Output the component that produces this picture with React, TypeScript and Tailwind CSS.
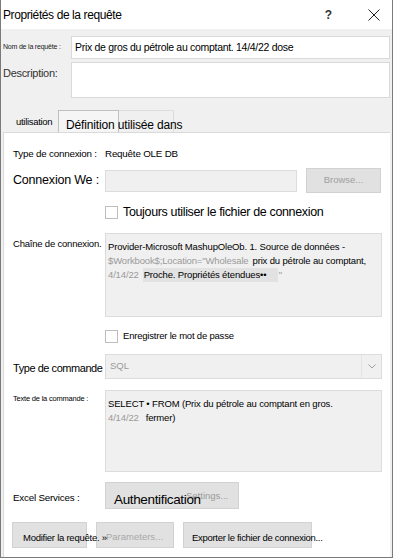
import type { ReactNode } from 'react';

/**
 * "Propriétés de la requête" dialog (Excel connection properties, Définition tab).
 * Fixed 393x558 window, Windows-style chrome.
 */
const FONT = "font-['Liberation_Sans',Arial,sans-serif]";

function Checkbox(): ReactNode {
  return <span className="block h-[13px] w-[13px] shrink-0 border border-[#bdbdbd] bg-white" />;
}

function GrayButton({
  className,
  children,
}: {
  readonly className: string;
  readonly children?: ReactNode;
}): ReactNode {
  return (
    <div
      className={`relative flex items-center border border-[#d2d2d2] bg-[#e1e1e1] ${className}`}
    >
      {children}
    </div>
  );
}

export default function App(): ReactNode {
  return (
    <div
      className={`${FONT} flex h-[558px] w-[393px] flex-col overflow-hidden border-x border-b border-[#7a7a7a] bg-[#f0f0f0] text-black`}
    >
      {/* title bar */}
      <div className="flex h-[29px] shrink-0 items-center bg-white">
        <span className="pl-[2px] text-[12px] tracking-[-0.4px]">Propriétés de la requête</span>
        <span className="ml-auto text-[12px] font-bold text-[#333]">?</span>
        <svg className="ml-[36px] mr-[12px]" width="12" height="12" viewBox="0 0 12 12">
          <path d="M0.5 0.5 L11.5 11.5 M11.5 0.5 L0.5 11.5" stroke="#222" strokeWidth="1" />
        </svg>
      </div>

      {/* name + description */}
      <div className="flex flex-col gap-[3px] pt-[7px]">
        <div className="flex h-[23px] items-center">
          <span className="w-[70px] pl-[2px] text-[7px] tracking-[-0.2px] text-[#222]">
            Nom de la requête :
          </span>
          <div className="flex h-full w-[319px] items-center border border-[#d9d9d9] bg-white pl-[3px] text-[10.5px] tracking-[-0.3px]">
            Prix de gros du pétrole au comptant. 14/4/22 dose
          </div>
        </div>
        <div className="flex h-[36px]">
          <span className="w-[70px] pl-[2px] pt-[3px] text-[11px] tracking-[-0.3px] text-[#333]">
            Description:
          </span>
          <div className="h-full w-[319px] border border-[#d9d9d9] bg-white" />
        </div>
      </div>

      {/* tabs */}
      <div className="mt-[12px] flex h-[22px] shrink-0 items-end">
        <span className="w-[15px]" />
        <span className="w-[42px] pb-[3px] text-[9.5px] tracking-[-0.3px]">utilisation</span>
        <div className="relative h-[22px] w-[61px] border-x border-t border-[#c0c0c0] bg-[#f5f5f5]">
          <span className="absolute left-[7px] top-[5px] whitespace-nowrap text-[12px] tracking-[-0.15px]">
            Définition utilisée dans
          </span>
        </div>
        <div className="h-[22px] w-[55px] border-r border-t border-[#dcdcdc]" />
      </div>

      {/* panel */}
      <div className="mx-[2px] flex flex-1 flex-col border-l border-t border-[#dadada] bg-white pl-[8px] pr-[7px]">
        <div className="mt-[14px] flex h-[14px] items-center text-[9.8px] tracking-[-0.2px]">
          <span className="w-[93px] pl-px">Type de connexion :</span>
          <span>Requête OLE DB</span>
        </div>

        <div className="mt-[7px] flex h-[25px] items-center">
          <span className="w-[93px] pl-px text-[12.5px] tracking-[-0.2px]">Connexion We :</span>
          <div className="h-[22px] w-[192px] border border-[#dcdcdc] bg-[#f0f0f0]" />
          <GrayButton className="ml-[9px] h-[25px] w-[75px] justify-center text-[9.5px] text-[#a0a0a0]">
            Browse...
          </GrayButton>
        </div>

        <div className="mt-[13px] flex h-[13px] items-center">
          <span className="w-[93px]" />
          <Checkbox />
          <span className="ml-[5px] text-[12.5px] tracking-[-0.35px]">
            Toujours utiliser le fichier de connexion
          </span>
        </div>

        <div className="mt-[14px] flex">
          <span className="w-[93px] pl-px pt-[4px] text-[9.5px] tracking-[-0.2px]">
            Chaîne de connexion.
          </span>
          <div className="h-[84px] w-[277px] border border-[#dcdcdc] bg-[#f0f0f0] pl-[2px] pt-[6px] text-[9.5px] leading-[14px] tracking-[-0.15px]">
            <div>Provider-Microsoft MashupOleOb. 1. Source de données -</div>
            <div className="whitespace-nowrap">
              <span className="text-[#9a9a9a]">$Workbook$;Location="Wholesale</span>
              <span className="ml-[4px]">prix du pétrole au comptant,</span>
            </div>
            <div className="flex items-center whitespace-nowrap">
              <span className="text-[#9a9a9a]">4/14/22</span>
              <span className="ml-[4px] w-[135px] bg-[#e2e2e2] pl-px">Proche. Propriétés étendues••</span>
              <span className="ml-px text-[#9a9a9a]">"</span>
            </div>
          </div>
        </div>

        <div className="mt-[13px] flex h-[13px] items-center">
          <span className="w-[93px]" />
          <Checkbox />
          <span className="ml-[5px] text-[9.5px] tracking-[-0.2px]">Enregistrer le mot de passe</span>
        </div>

        <div className="mt-[11px] flex h-[25px] items-center">
          <span className="w-[93px] shrink-0 whitespace-nowrap pl-px pt-[3px] text-[11px] tracking-[-0.45px]">
            Type de commande
          </span>
          <div className="flex h-[25px] w-[277px] items-center border border-[#dcdcdc] bg-[#f0f0f0]">
            <span className="pl-[4px] text-[9.5px] text-[#9a9a9a]">SQL</span>
            <div className="ml-auto flex h-full w-[20px] items-center justify-center border-l border-[#e4e4e4]">
              <svg width="8" height="5" viewBox="0 0 8 5">
                <path d="M0.5 0.5 L4 4 L7.5 0.5" fill="none" stroke="#a0a0a0" strokeWidth="1" />
              </svg>
            </div>
          </div>
        </div>

        <div className="mt-[11px] flex">
          <span className="w-[93px] pl-px pt-[3px] text-[7.5px] tracking-[-0.2px]">
            Texte de la commande :
          </span>
          <div className="h-[82px] w-[277px] border border-[#dcdcdc] bg-[#f0f0f0] pl-[2px] pt-[6px] text-[9.5px] leading-[14px] tracking-[-0.15px]">
            <div>SELECT • FROM (Prix du pétrole au comptant en gros.</div>
            <div>
              <span className="text-[#9a9a9a]">4/14/22</span>
              <span className="ml-[7px]">fermer)</span>
            </div>
          </div>
        </div>

        <div className="mt-[10px] flex h-[27px] items-center">
          <span className="w-[93px] pl-px pt-[6px] text-[9.8px] tracking-[-0.2px]">Excel Services :</span>
          <GrayButton className="h-[27px] w-[134px]">
            <span className="absolute left-[80px] top-[6px] text-[9.5px] text-[#9a9a9a]">Settings...</span>
            <span className="absolute left-[8px] top-[7px] whitespace-nowrap text-[13.5px] tracking-[-0.35px]">
              Authentification
            </span>
          </GrayButton>
        </div>

        <div className="mt-[13px] flex h-[26px] items-center">
          <GrayButton className="h-[26px] w-[75px]">
            <span className="absolute left-[10px] top-[8px] z-10 whitespace-nowrap text-[9.5px] tracking-[-0.25px]">
              Modifier la requête. »
            </span>
          </GrayButton>
          <GrayButton className="ml-[9px] h-[26px] w-[78px]">
            <span className="absolute left-[9px] top-[7px] text-[9.5px] text-[#a8a8a8]">Parameters...</span>
          </GrayButton>
          <GrayButton className="ml-[9px] h-[26px] w-[129px]">
            <span className="absolute left-[8px] top-[8px] whitespace-nowrap text-[9.5px] tracking-[-0.3px]">
              Exporter le fichier de connexion...
            </span>
          </GrayButton>
        </div>
      </div>
    </div>
  );
}
